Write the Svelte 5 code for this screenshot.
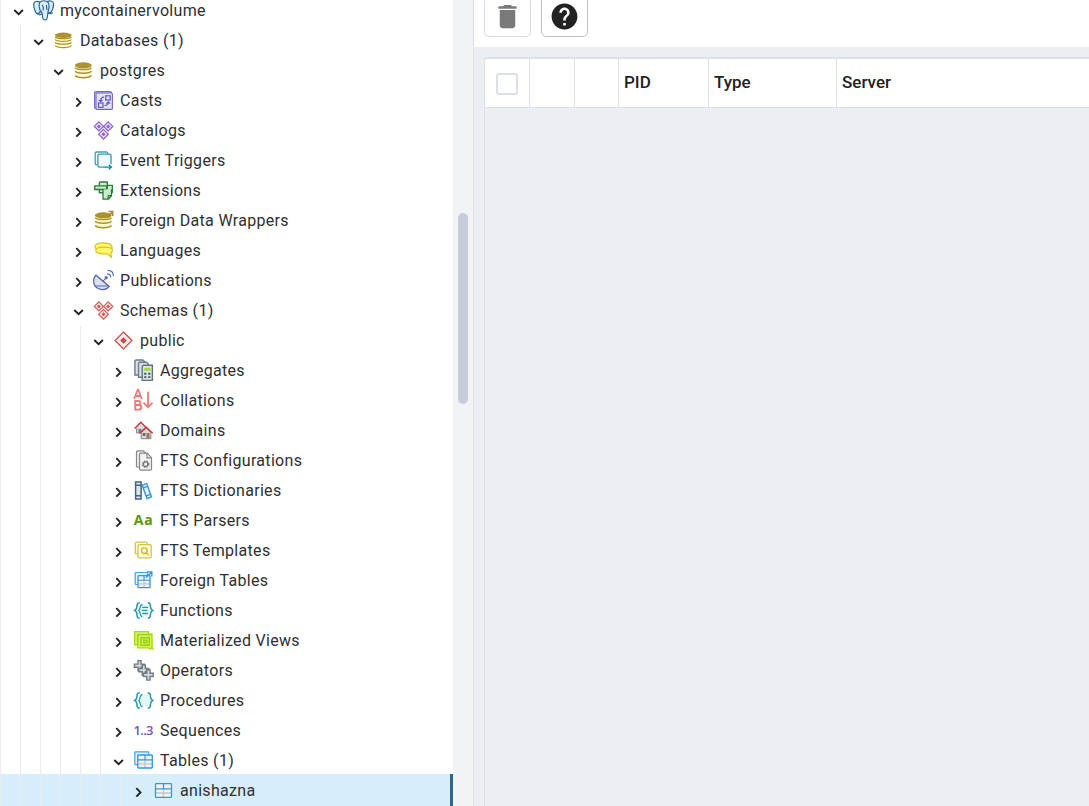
<script>
  const diamond = (x, y, r, c, f) =>
    `<path d="M${x} ${y - r}l${r} ${r}-${r} ${r}-${r}-${r}z" fill="${f}" stroke="${c}" stroke-width="1.2"/><path d="M${x} ${y - 2}l2 2-2 2-2-2z" fill="${c}"/>`;
  const trio = (c, f) => diamond(4.9, 5.4, 4.6, c, f) + diamond(14.2, 5.4, 4.6, c, f) + diamond(9.5, 13.2, 4.9, c, f);
  const disks =
    '<path d="M1.2 4v11c0 1.4 3.5 2.2 8.1 2.2s8.1-.8 8.1-2.2V4z" fill="#fffbd2"/><path d="M1.2 6.600c1.500 2.600 14.700 2.600 16.200 0M1.200 10.200c1.500 2.600 14.700 2.600 16.200 0M1.200 14.400c1.500 3 14.700 3 16.200 0" fill="none" stroke="#ad932d" stroke-width="1.500"/><ellipse cx="9.300" cy="4.300" rx="8.400" ry="3" fill="#ad932d"/>';
  const braces =
    '<path d="M5.700 1.700C3.200 1.700 3 2.700 3 4.700S3 8.400.700 9.400C3 10.400 3 12 3 14s.2 3.300 2.700 3.300M13.700 1.700c2.500 0 2.700 1 2.700 3s0 3.700 2.300 4.700c-2.300 1-2.300 2.600-2.300 4.600s-.2 3.300-2.700 3.300" fill="none" stroke="#2d99aa" stroke-width="1.500"/>';
  const grid = (x, y, w, h) =>
    `<rect x="${x}" y="${y}" width="${w}" height="${h}" rx=".8" fill="#f0f2f4"/><path d="M${x} ${y + h * 0.68}h${w}M${x + w / 2} ${y + h * 0.38}v${h * 0.62}" stroke="#c2c7ce" stroke-width="1.3"/><path d="M${x} ${y + h * 0.38}h${w}M${x + w / 2} ${y}v${h * 0.38}" stroke="#3498db" stroke-width="1.2"/><rect x="${x}" y="${y}" width="${w}" height="${h}" rx=".8" fill="none" stroke="#3498db" stroke-width="1.3"/>`;
  const sheet = (x, y) =>
    `<path d="M${x} ${y + 1}l1-1h7l2 2v13h-10z" fill="#d5e4ef" stroke="#737b80" stroke-width="1.4"/>`;

  const icons = {
    server:
      '<g fill="#d5effb" stroke="#336791" stroke-width="1.200" stroke-linejoin="round"><path d="M6 1C3-.3-.3.100-.3 3.600c0 3.300 2 9.200 3.900 9.200 1.200 0 2.200-1.500 2.800-2.300zM13 .6c3.600-1.400 6.600-.4 6.600 2.300 0 3-2 7.500-3.400 9.200l-3-1z"/><path d="M6 1c2.200-1.400 5.200-1.500 7.300-.2 2.300 1.500 2.100 6 1 9-.5 1.300-.6 2.800-.7 4.200-.1 3-.6 5-2.500 5-2.300 0-2.600-1.700-2.700-4.500 0-1.600-.3-2.800-1-3.700C5.100 9 4.400 3.500 6 1z"/><path d="M6.300 10.900c-.5 1.300-1.800 1.600-2.400 2.200 1.200.9 3 .6 4.100-.3M14 12.300c1.500.6 3.500.3 4.800-.8M7.800 4.500c1.400-.4 1.900 3 1.200 5M12.700 4c-.8.500.4 3 .1 5" fill="none"/></g>',
    databases:
      '<path d="M1.200 3.500v11.500c0 1.300 3.500 2.200 8.100 2.200s8.100-.9 8.100-2.200V3.500z" fill="#fffbd2"/><path d="M1.200 5.800c1.500 2.400 14.700 2.400 16.200 0M1.200 8.500c1.500 2.400 14.700 2.400 16.200 0M1.200 11.400c1.500 2.400 14.700 2.400 16.200 0M1.200 14.500c1.500 2.800 14.700 2.800 16.200 0" fill="none" stroke="#ad932d" stroke-width="1.300"/><ellipse cx="9.300" cy="4.300" rx="8.400" ry="2.700" fill="#ad932d"/>',
    database: disks,
    casts:
      '<rect x=".6" y=".6" width="16.800" height="16.800" rx="1.200" fill="#dedcf8" stroke="#7166cc" stroke-width="1.100"/><rect x="2" y="2" width="16.400" height="16.400" rx="1" fill="#e5e3fb" stroke="#7166cc" stroke-width="1.100"/><g fill="none" stroke="#6256bd" stroke-width="1.200"><rect x="11.700" y="4.800" width="4.500" height="4.200"/><rect x="4.500" y="12" width="4.500" height="4.300"/><path d="M10 6.200c-2.500 0-3.300 1-3.300 4M4.800 8.800l1.900 1.900 1.900-1.900M10.500 14.600c2.800 0 3.800-1 3.800-3.500M12.400 12.600l1.900-1.700 1.900 1.700"/></g>',
    catalogs: trio('#8960c6', '#eadffb'),
    eventTriggers:
      '<path d="M3 13.800H2.500a1.300 1.300 0 0 1-1.300-1.300V2.300A1.300 1.300 0 0 1 2.500 1h9.800A1.300 1.300 0 0 1 13.600 2.300V3" fill="none" stroke="#3ca1b0" stroke-width="1.300"/><path d="M17 13V4.500A1.300 1.300 0 0 0 15.700 3.200H5.200a1.300 1.300 0 0 0-1.300 1.300v10.300a1.300 1.300 0 0 0 1.300 1.300h7" fill="#effbfd" stroke="#2d9aab" stroke-width="1.300"/><path d="M11.500 16.100h6M14.800 13.700l2.600 2.400-2.600 2.400" fill="none" stroke="#168a9d" stroke-width="1.400"/>',
    extensions:
      '<g fill="#cbeacf" stroke="#277e34" stroke-width="1.300" stroke-linejoin="round"><path d="M5.300 11.700h12.200a.9.900 0 0 0 .9-.9V4.300H5.300z"/><path d="M5.300 4.800V1.900a.9.900 0 0 1 .9-.9h7.100v7.200"/><path d="M.7 4.800h12v3.700H.7z"/><path d="M9 8.500v9.700h5.300l3.200-3.400V8.200"/><path d="M5.300 11.700H9M14.200 18v-3.300h3.300" fill="none"/></g>',
    fdw: disks + '<path d="M14 6l4.500-5M14.500.6h4.200V5" fill="none" stroke="#ad832d" stroke-width="1.500"/>',
    languages:
      '<g fill="#fff966" stroke="#d9bf2a" stroke-width="1.200"><path d="M3 8.500C-.7 6.500.2 1.900 9 1.900s9.300 3.100 9.100 5.300z"/><path d="M9.300 6.200c-5 0-7.500 1.200-7.500 3.300s3 3.300 8 3.300h3.300l4.300 3.500-.4-4.600c1.200-.7 1.500-1.400 1.500-2.500 0-2.200-4.200-3-9.200-3z"/></g>',
    publications:
      '<path d="M2 4.200C-2 8.500-.8 15 4.200 17.500c4.200 2 8.500 1 11-2.100z" fill="#dbe0ee" stroke="#5468b3" stroke-width="1.300"/><path d="M1 15h12.500M8.800 10.400l3.200-3.300" fill="none" stroke="#5468b3" stroke-width="1.100"/><circle cx="12.200" cy="6.700" r="1.600" fill="#5468b3"/><path d="M13 2.800c2.200 0 3.700 1.400 3.700 3.800M13.600-.6c3.500 0 5.800 2.300 5.800 5.700" fill="none" stroke="#5368bb" stroke-width="1.200"/>',
    schemas: trio('#d15a5a', '#fbe1e1'),
    schema:
      '<path d="M9.500 1l8.500 8.500-8.500 8.500L1 9.500z" fill="#fdeaea" stroke="#c94848" stroke-width="1.200"/><path d="M9.500 6.200l3.300 3.300-3.300 3.300-3.300-3.300z" fill="#c94848"/>',
    aggregates:
      sheet(0.9, -1) + sheet(4.5, 1.3) +
      '<path d="M8.200 5.200l1.200-1h9v15.200H8.200z" fill="#d5e4ef" stroke="#697176" stroke-width="1.400"/><path d="M10.200 6.800h6.400v3h-6.400z" fill="#a4d93c"/><path d="M10.200 11.800h2.200v1.900h-2.200zM14.200 11.800h2.200v1.900h-2.200zM10.200 15.200h2.200v1.900h-2.200zM14.200 15.200h2.200v1.900h-2.200z" fill="#555"/>',
    collations:
      '<g fill="none" stroke="#ee7b77" stroke-width="1.800"><path d="M.1 8L3.700-1.300h.5L7.800 8M1.500 5h5.300M1.200 10h3c3 0 3 4 0 4h-3zM1.200 14h3.500c3.500 0 3.500 4.600 0 4.600H1.200zM14 .8v15.400M9.500 11.700l4.500 4.500 4.500-4.500"/></g>',
    domains:
      '<path d="M2.500 6.700h10v5.300h-10z" fill="#d0d5d9" stroke="#858a8e"/><path d="M4.500 8h2.800v4H4.500z" fill="#777"/><path d="M.7 7.500L6.800 1.200l6.300 6.300" fill="#d8dde0" stroke="#cf3a38" stroke-width="1.500"/><path d="M7.200 11.700l5-4.500 4.700 4.500v6H7.200z" fill="#d3d8dc" stroke="#7f8589"/><path d="M8.800 12h2.600v3H8.800z" fill="#6c6862"/><path d="M12.500 12h3v5.500h-3z" fill="#9c7747"/><path d="M5.700 12.200l6.500-6 6.500 6" fill="none" stroke="#cf3a38" stroke-width="1.500"/>',
    ftsConf:
      '<g fill="#f1f1f1" stroke="#868686" stroke-width="1.200"><path d="M2.500 16V1A1.200 1.200 0 0 1 3.700-.2h5.600l3 3V16z"/><path d="M5.500 18V3.400a1.200 1.200 0 0 1 1.200-1.200h6.500l4.300 4.500V18a1.200 1.200 0 0 1-1.200 1.200H6.700A1.200 1.200 0 0 1 5.500 18z"/><path d="M13 2.300v4.600h4.500" fill="none"/></g><circle cx="11.600" cy="13.200" r="3.100" fill="none" stroke="#777" stroke-width="1.300" stroke-dasharray="1.500 1"/><circle cx="11.600" cy="13.200" r="2.200" fill="none" stroke="#777" stroke-width="1.200"/>',
    ftsDict:
      '<path d="M1.600.9h5.500v17H1.600z" fill="#d9e7ef" stroke="#456579" stroke-width="1.500"/><path d="M1.600 4.200h5.500M1.600 14.800h5.500" stroke="#456579" stroke-width="1.500"/><path d="M8.200 4.100l4.500-1.500 4.800 13.300-4.500 1.600z" fill="#e5f4fd" stroke="#3895d4" stroke-width="1.400"/><path d="M9 6.900l4.700-1.500M12 14.900l4.700-1.600" stroke="#3895d4" stroke-width="1.400"/>',
    ftsParser: '<text x="-.3" y="14" font-family="Open Sans" font-weight="700" font-size="14" textLength="19" fill="#5b9511">Aa</text>',
    ftsTemplate:
      '<g fill="#fffbe0" stroke="#d7c443" stroke-width="1.300"><rect x="1.400" y="1.200" width="12" height="12" rx="1.300"/><rect x="4" y="3.600" width="13.200" height="13.200" rx="1.300"/></g><g fill="none" stroke="#cdb826" stroke-width="1.300"><circle cx="10.300" cy="9.700" r="2.800"/><path d="M12.300 11.700l2.500 2.600"/></g>',
    foreignTables:
      '<rect x="1.200" y="1.500" width="12.300" height="12" rx=".8" fill="#e3f3fd" stroke="#3fa0e2" stroke-width="1.200"/>' + grid(4, 4.7, 12, 12) +
      '<path d="M12 6.500l5.300-5M13 .900h4.800v4.500" fill="none" stroke="#2f94dc" stroke-width="1.400"/>',
    functions:
      '<path d="M8 3.600C4.500 3.600 6.500 8 4 9.500c2.500 1.500.5 6.300 4 6.300h3.800c3.300 0 1.400-4.800 3.800-6.300-2.400-1.500-.5-5.900-3.800-5.900z" fill="#e0f8fb"/>' + braces +
      '<path d="M8.500 3.500C5.500 3.300 6.800 8.200 4.700 9.500c2.100 1.400.8 6.200 3.800 6.200M8.200 6.300h6M7.800 9.400h5.800M8.200 12.500h6" fill="none" stroke="#2d99aa" stroke-width="1.300"/>',
    matViews:
      '<path d="M.6.6h13.800v2.600h3.600v13l.8 1.600-1.600-.5-1.200.6-1.400-1H3.800v-3H.6z" fill="#d6f263" stroke="#a5dc16" stroke-width="1.400"/><path d="M3.800 14V3.600h14M7 6.700h8.300v7.600H7zM9.700 9.200h3.300v2.600H9.700z" fill="none" stroke="#97d010" stroke-width="1.400"/>',
    operators:
      '<g fill="#cddbe7" stroke="#747a7f" stroke-width="1.400"><path d="M4 -.4h3v3.500h3.300v3.200H7v3.500H4V6.300H.4V3.100H4z"/><path d="M8.300 4h3v3.500h3.300v3.200h-3.300v3.500h-3v-3.500H4.900V7.500h3.400z"/><path d="M12.800 8.700h3.200v3.500h3.200v3.300H16v3.600h-3.200v-3.600H9.400v-3.300h3.400z"/></g>',
    procedures:
      '<path d="M8.500 3.700h4c1.800 0 1.500 4.300 3 5.800-1.500 1.500-1.200 6.300-3 6.300h-4C6.700 15.800 7 11 5.500 9.500 7 8 6.700 3.700 8.500 3.700z" fill="#e0fafb"/>' + braces +
      '<path d="M8.500 3.500C5.500 3.300 6.800 8.200 4.700 9.500c2.100 1.400.8 6.200 3.800 6.200" fill="none" stroke="#2d99aa" stroke-width="1.300"/>',
    sequences: '<text x="-.5" y="14" font-family="Open Sans" font-weight="600" font-size="13" textLength="20" fill="#7e52b8">1..3</text>',
    tables:
      '<rect x=".8" y=".8" width="14" height="12.800" rx=".8" fill="#e3f3fd" stroke="#3fa0e2" stroke-width="1.200"/>' + grid(3.7, 4, 14.6, 13),
    table: grid(1.5, 2.6, 16, 13.8)
  };

  const rows = [
    [0, 'server', 'mycontainervolume', true],
    [1, 'databases', 'Databases (1)', true],
    [2, 'database', 'postgres', true],
    [3, 'casts', 'Casts'],
    [3, 'catalogs', 'Catalogs'],
    [3, 'eventTriggers', 'Event Triggers'],
    [3, 'extensions', 'Extensions'],
    [3, 'fdw', 'Foreign Data Wrappers'],
    [3, 'languages', 'Languages'],
    [3, 'publications', 'Publications'],
    [3, 'schemas', 'Schemas (1)', true],
    [4, 'schema', 'public', true],
    [5, 'aggregates', 'Aggregates'],
    [5, 'collations', 'Collations'],
    [5, 'domains', 'Domains'],
    [5, 'ftsConf', 'FTS Configurations'],
    [5, 'ftsDict', 'FTS Dictionaries'],
    [5, 'ftsParser', 'FTS Parsers'],
    [5, 'ftsTemplate', 'FTS Templates'],
    [5, 'foreignTables', 'Foreign Tables'],
    [5, 'functions', 'Functions'],
    [5, 'matViews', 'Materialized Views'],
    [5, 'operators', 'Operators'],
    [5, 'procedures', 'Procedures'],
    [5, 'sequences', 'Sequences'],
    [5, 'tables', 'Tables (1)', true],
    [6, 'table', 'anishazna', false, true]
  ];
</script>

<div class="app">
  <nav class="tree">
    {#each rows as [depth, icon, label, open, selected]}
      <div class="row" class:selected>
        {#each Array(depth + 1) as _}<span class="guide"></span>{/each}
        <svg class="chevron" viewBox="0 0 12 12" width="12" height="12">
          <path d={open ? 'M1.300 5l4.300 4.200L9.900 5' : 'M3.300 3.200l4.200 4.200-4.200 4.200'} />
        </svg>
        <svg class="icon" viewBox="0 0 20 20" width="20" height="20">{@html icons[icon]}</svg>
        <span class="label">{label}</span>
      </div>
    {/each}
  </nav>
  <div class="track"><div class="thumb"></div></div>
  <main>
    <div class="toolbar">
      <button class="disabled" aria-label="Delete">
        <svg viewBox="0 0 24 24" width="31" height="31"><path d="M6 19c0 1.100.9 2 2 2h8c1.100 0 2-.9 2-2V7H6v12zM19 4h-3.500l-1-1h-5l-1 1H5v2h14V4z" /></svg>
      </button>
      <button aria-label="Help">
        <svg viewBox="0 0 24 24" width="31" height="31"><path d="M12 2C6.480 2 2 6.480 2 12s4.480 10 10 10 10-4.480 10-10S17.520 2 12 2zm1 17h-2v-2h2v2zm2.070-7.750l-.9.920C13.450 12.900 13 13.500 13 15h-2v-.5c0-1.100.450-2.100 1.170-2.830l1.240-1.260c.370-.360.590-.860.590-1.410 0-1.100-.9-2-2-2s-2 .9-2 2H8c0-2.210 1.790-4 4-4s4 1.790 4 4c0 .880-.360 1.680-.930 2.250z" /></svg>
      </button>
    </div>
    <div class="grid">
      <div class="head">
        <div class="check"><span class="box"></span></div>
        <div></div>
        <div></div>
        <div>PID</div>
        <div>Type</div>
        <div>Server</div>
      </div>
    </div>
  </main>
</div>

<style>
  :global(body) {
    margin: 0;
    overflow: hidden;
  }
  .app {
    display: flex;
    width: 100vw;
    height: 806px;
    overflow: hidden;
    background: #fff;
    color: #222;
    font-family: Roboto, sans-serif;
  }
  .tree {
    width: 453px;
    flex: none;
    margin-top: -4px;
  }
  .row {
    display: flex;
    align-items: center;
    height: 30px;
  }
  .row.selected {
    margin-top: -2px;
    padding-top: 2px;
    background: #d6eefc;
    border-right: 3px solid #326690;
  }
  .guide {
    width: 19px;
    height: 30px;
    flex: none;
    border-left: 1px solid #e8ebf2;
  }
  .chevron {
    flex: none;
    margin-left: -7px;
    fill: none;
    stroke: #222;
    stroke-width: 1.9;
  }
  .icon {
    flex: none;
    margin-left: 9px;
    overflow: visible;
  }
  .label {
    margin-left: 6px;
    color: #303030;
    font-size: 16px;
    line-height: 30px;
    letter-spacing: 0.31px;
    white-space: nowrap;
  }
  .track {
    width: 10px;
    padding: 213px 5px 0;
    background: #f1f3f5;
    flex: none;
  }
  .thumb {
    height: 191px;
    border-radius: 5px;
    background: #c9cdd9;
  }
  main {
    flex: 1;
    display: flex;
    flex-direction: column;
    min-width: 0;
    border-left: 1px solid #dde0e6;
    background: #ebeef3;
  }
  .toolbar {
    display: flex;
    gap: 10px;
    height: 47px;
    padding-left: 10px;
    background: #fff;
    flex: none;
  }
  button {
    display: flex;
    align-items: center;
    justify-content: center;
    width: 47px;
    height: 41px;
    margin: -4px 0 0;
    padding: 0 1px 0 0;
    border: 1px solid #bac1cd;
    border-radius: 5px;
    background: #fff;
    fill: #222;
  }
  button.disabled {
    border-color: #d6d9e3;
    fill: #7a7a7a;
  }
  .grid {
    flex: 1;
    margin: 10px 0 0 10px;
    border: solid #dde0e6;
    border-width: 2px 0 0 1px;
    border-top-left-radius: 4px;
    overflow: hidden;
  }
  .head {
    display: grid;
    grid-template-columns: 45px 45px 44px 90px 128px 1fr;
    height: 48px;
    border-bottom: 1px solid #dde0e6;
    background: #fff;
    font-size: 17px;
    font-weight: 500;
    line-height: 47px;
  }
  .head > div {
    padding-left: 5px;
    border-right: 1px solid #dde0e6;
  }
  .head > div:last-child {
    border-right: 0;
  }
  .head > .check {
    display: flex;
    align-items: center;
    padding: 2px 0 0 11px;
  }
  .box {
    width: 18px;
    height: 18px;
    border: 2px solid #dde0e6;
    border-radius: 3px;
  }
</style>
